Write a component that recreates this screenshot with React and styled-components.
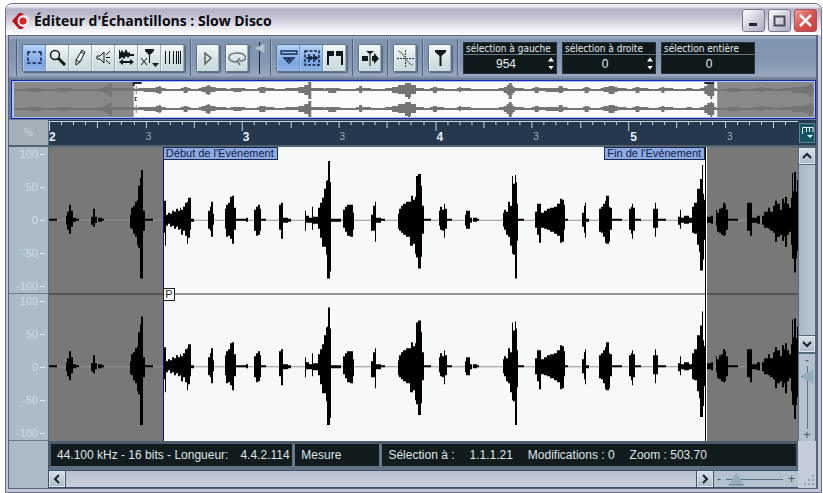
import React from 'react';
import styled, { createGlobalStyle, css } from 'styled-components';

const Global = createGlobalStyle`
  * { box-sizing: border-box; }
  body { margin: 0; background: #fff; font-family: "Liberation Sans", Arial, sans-serif; font-size: 11px; }
  button, input { font: inherit; margin: 0; padding: 0; border: 0; }
`;

const Page = styled.div`
  height: 100vh;
  min-height: 420px;
  padding: 3px 1px 0 5px;
`;
const Window = styled.main`
  height: 100%;
  display: flex;
  flex-direction: column;
  border: 1px solid #6e6e83;
  border-radius: 7px 7px 0 0;
  background: #c5c6da;
  padding: 0 3px 3px 2px;
  overflow: hidden;
`;
const TitleBar = styled.header`
  flex: none;
  height: 31px;
  margin: 0 -3px 0 -2px;
  padding: 2px 4px 0 5px;
  display: flex;
  align-items: center;
  gap: 5px;
  background: linear-gradient(#f4f3fa 0, #e9e8f2 3px, #b4b2c4 5px, #bbb9ca 10px, #dddce6 20px, #fff 30px);
`;
const Title = styled.h1`
  flex: 1;
  margin: 0;
  font: bold 14px/20px "Open Sans", "Noto Sans", sans-serif;
  color: #08080c;
  white-space: nowrap;
`;
const WindowButtons = styled.div`
  display: flex;
  gap: 3px;
`;
const WindowButton = styled.button`
  width: 23px;
  height: 23px;
  display: grid;
  place-items: center;
  border: 1px solid ${p => (p.$close ? '#a3535c' : '#77778a')};
  border-radius: 3px;
  background: ${p => (p.$close
    ? 'linear-gradient(135deg, #eda19d, #d8524f 50%, #c7423f)'
    : 'linear-gradient(135deg, #fff, #c9c9d8 60%, #aeaec4)')};
`;
const Body = styled.div`
  flex: 1;
  min-height: 0;
  display: flex;
  flex-direction: column;
  border: 1px solid #56657b;
  border-right-width: 2px;
  background: #6b7c90;
`;
const Toolbar = styled.div`
  flex: none;
  height: 43px;
  padding: 3px 6px 3px 7px;
  display: flex;
  align-items: center;
  gap: 5px;
  background: linear-gradient(#a5b3cb 0, #8194b0 4px, #8496b0 60%, #98a6be 92%, #6b7c93);
`;
const Separator = styled.span`
  align-self: stretch;
  width: 1px;
  flex: none;
  background: #4d6079;
  box-shadow: 1px 0 #9aabc2;
`;
const ToolGroup = styled.div`
  display: flex;
  flex: none;
  border: 1px solid #5f7389;
  border-radius: 2px;
  box-shadow: 1px 1px 1px #53657b;
`;
const ToolButton = styled.button`
  width: ${p => (p.$single ? 22 : 23)}px;
  height: 26px;
  display: grid;
  place-items: center;
  color: #10181c;
  background: ${p => (p.$active
    ? 'linear-gradient(#b5d2fb, #7ba5e0 70%, #93b6e8)'
    : 'linear-gradient(#f4faf9, #d5e2e5 55%, #cbdade)')};
  border-left: 1px solid ${p => (p.$active ? '#a9c6f0' : '#eef5f8')};
  border-right: 1px solid ${p => (p.$active ? '#7596c8' : '#9aabb7')};
  svg { display: block; }
`;
const Readout = styled.label`
  flex: 0 1 94px;
  min-width: 0;
  height: 32px;
  color: #e6eef0;
  background: #0f181b;
  border: 1px solid #26343d;
  overflow: hidden;
`;
const ReadoutName = styled.span`
  display: block;
  height: 12px;
  padding-left: 2px;
  border-bottom: 1px solid #66777d;
  font: 10px/11px "DejaVu Sans Condensed", "DejaVu Sans", sans-serif;
  white-space: nowrap;
`;
const ReadoutLine = styled.span`
  display: flex;
  height: 18px;
  align-items: center;
`;
const ReadoutInput = styled.input`
  flex: 1;
  width: 0;
  height: 18px;
  padding-left: ${p => (p.$spin ? 0 : 2)}px;
  background: transparent;
  color: inherit;
  text-align: center;
  font-size: 12px;
`;
const Spinner = styled.span`
  display: flex;
  flex-direction: column;
  gap: 4px;
  width: 8px;
`;
const SpinButton = styled.button`
  width: 6px;
  height: 5px;
  background: #fff;
  clip-path: ${p => (p.$down ? 'polygon(0 0, 100% 0, 50% 80%)' : 'polygon(50% 20%, 100% 100%, 0 100%)')};
`;
const Overview = styled.div`
  flex: none;
  height: 39px;
  margin: 1px 0 1px 2px;
  border: 1px solid #1b23ad;
  background: #a9c4fb;
  padding: 1px 1px 1px 2px;
  svg { display: block; width: 100%; height: 100%; }
`;
const RulerRow = styled.div`
  flex: none;
  height: 27px;
  display: grid;
  grid-template-columns: 39px minmax(0, 1fr) 18px;
  border-bottom: 2px solid #51646f;
`;
const RulerCorner = styled.div`
  display: grid;
  place-items: center;
  color: #cdd7df;
  background: #a5afba;
  font-size: 10px;
`;
const Ruler = styled.div`
  background: #25384c;
  border-left: 1px solid #566a79;
  overflow: hidden;
`;
const RulerTicks = styled.svg`
  display: block;
  width: 100%;
  height: 11px;
`;
const RulerLabels = styled.div`
  display: grid;
  grid-template-columns: repeat(7, 97fr) 71fr;
`;
const RulerLabel = styled.span`
  font: ${p => (p.$bar ? 'bold 12px' : '10px')}/12px "Liberation Sans", Arial, sans-serif;
  color: ${p => (p.$bar ? '#e3f1fa' : '#9aaab8')};
`;
const RulerCell = styled.div`
  display: grid;
  place-items: center;
  background: #25384c;
`;
const RulerButton = styled.button`
  width: 16px;
  height: 20px;
  display: grid;
  place-items: center;
  color: #e3f5f7;
  background: #155366;
  border: 1px solid #5b8695;
`;
const Editor = styled.div`
  flex: 1;
  min-height: 0;
  display: grid;
  grid-template-columns: 39px minmax(0, 1fr) 18px;
`;
const Scales = styled.div`
  display: grid;
  grid-template-rows: 1fr 1fr;
  background: #acbbc8;
`;
const Scale = styled.div`
  display: flex;
  flex-direction: column;
  justify-content: space-between;
  padding: 1px 3px 0 0;
  border-bottom: 1px solid #6d7d8e;
  color: #d2dce4;
  line-height: 13px;
  text-align: right;
`;
const Mark = styled.span`
  display: flex;
  justify-content: flex-end;
  align-items: center;
  gap: 2px;
  &::after { content: ""; width: 5px; height: 1px; background: #e2eaf0; }
`;
const Canvas = styled.div`
  position: relative;
  display: grid;
  border-left: 1px solid #566a79;
  background: #787878;
`;
const Wave = styled.svg`
  position: absolute;
  inset: 0;
  width: 100%;
  height: 100%;
`;
const EventRange = styled.div`
  position: relative;
  display: flex;
  justify-content: space-between;
  align-items: flex-start;
  margin: 0 12.4% 0 15.2%;
`;
const Flag = styled.span`
  height: 13px;
  padding: 0 3px 0 2px;
  border: 1px solid #1c2a52;
  background: #8eaae4;
  color: #111e42;
  line-height: 11px;
  white-space: nowrap;
`;
const PhaseMarker = styled.span`
  position: absolute;
  left: 0;
  top: calc(50% - 6px);
  width: 12px;
  height: 13px;
  border: 1px solid #222;
  background: #fff;
  color: #222;
  line-height: 11px;
  text-align: center;
`;
const SideColumn = styled.div`
  display: flex;
  flex-direction: column;
  gap: 1px;
  padding: 1px 1px 0 1px;
  background: #566a79;
`;
const ScrollButton = styled.button`
  flex: none;
  width: 16px;
  height: 16px;
  display: grid;
  place-items: center;
  color: #17232c;
  background: linear-gradient(#d7dfe7, #adbbca);
  border: 1px solid #dce5ed;
`;
const track = css`
  background: ${p => (p.$horizontal ? 'linear-gradient(#b7c0cc, #cbd0dd)' : 'linear-gradient(90deg, #a7b6c2, #bcc9d3)')};
`;
const ScrollTrack = styled.div`
  flex: 1;
  min-height: 0;
  ${track}
`;
const ZoomBox = styled.div`
  flex: none;
  display: flex;
  flex-direction: ${p => (p.$horizontal ? 'row' : 'column')};
  align-items: center;
  justify-content: space-between;
  ${p => (p.$horizontal ? 'width: 84px; padding: 0 3px; gap: 5px;' : 'height: 87px; margin-top: 1px;')}
  color: #465563;
  font-size: 12px;
  line-height: 12px;
  background: #b4c2cf;
`;
const Slider = styled.input.attrs({ type: 'range' })`
  appearance: none;
  flex: 1;
  min-width: 0;
  min-height: 0;
  width: 14px;
  background: ${p => (p.$horizontal
    ? 'linear-gradient(#5f7180, #5f7180) center / 100% 1px no-repeat'
    : 'linear-gradient(#5f7180, #5f7180) center / 1px 100% no-repeat')};
  ${p => !p.$horizontal && 'writing-mode: vertical-lr;'}
  &::-webkit-slider-thumb {
    appearance: none;
    width: ${p => (p.$horizontal ? 16 : 13)}px;
    height: ${p => (p.$horizontal ? 13 : 15)}px;
    background: linear-gradient(${p => (p.$horizontal ? '' : '270deg, ')}#96abbc 80%, #5f7486);
    clip-path: ${p => (p.$horizontal ? 'polygon(50% 0, 100% 100%, 0 100%)' : 'polygon(0 50%, 100% 0, 100% 100%)')};
  }
`;
const ToolSlider = styled(Slider)`
  flex: none;
  width: 11px;
  height: 32px;
  background: linear-gradient(#182836, #182836) center / 1px 100% no-repeat;
  &::-webkit-slider-thumb { width: 10px; height: 9px; background: #b4c3d4; }
`;
const Footer = styled.div`
  flex: none;
  display: grid;
  grid-template-columns: 39px minmax(0, 1fr) 18px;
`;
const FooterSide = styled.div`
  display: flex;
  align-items: flex-end;
  justify-content: flex-end;
  background: ${p => (p.$grip ? '#c3ccd8' : '#adbbc9')};
`;
const StatusBar = styled.div`
  height: 29px;
  display: grid;
  grid-template-columns: 241fr 84fr 413fr;
  gap: 3px;
  border: 3px solid #4b5d6c;
  border-bottom: 4px solid #5f7284;
  border-right-width: 2px;
  background: #64798a;
`;
const StatusCell = styled.div`
  display: flex;
  align-items: center;
  gap: ${p => (p.$tight ? 12 : 15)}px;
  min-width: 0;
  overflow: hidden;
  padding-left: 6px;
  background: #121b1e;
  color: #dfe6e6;
  font-size: 12px;
  white-space: nowrap;
`;
const ScrollRow = styled.div`
  height: 18px;
  display: flex;
  gap: 1px;
  padding: 1px 0 1px 1px;
  background: #3f5267;
`;

const icons = {
  select: <g fill="none" stroke="#16264a" strokeWidth="1.500" strokeDasharray="3.500 2"><path d="M1 3H16M1 14H16M2 3V14M15 3V14" /></g>,
  zoom: <g fill="none" stroke="currentColor"><circle cx="6" cy="6" r="4.5" strokeWidth="1.5" /><path d="M9 9L16 16" strokeWidth="3" /></g>,
  draw: <path d="M10 1L13 3L8 13L4 16L4 11ZM4 11L8 13M9 3L12 5" fill="#eef3f3" stroke="currentColor" />,
  play: <path d="M2 7H5L9 3V14L5 10H2ZM11 6L15 2M11 8.500H15M11 11L15 15" fill="none" stroke="currentColor" />,
  scrub: <g fill="currentColor"><path d="M1 1H2V4L4 1L6 4L8 0L10 4L12 3V5H16V7H12L10 9L8 7L6 10L4 8L2 10H1Z" /><path d="M1 13L5 10V12H12V10L16 13L12 16V14H5V16Z" /></g>,
  warp: <g fill="currentColor"><path d="M4 0H13V2L9 6V14H8V6L4 2Z" /><path d="M0 9L6 16M6 9L0 16" stroke="currentColor" fill="none" /><path d="M11 14H18L14.500 18Z" /></g>,
  grid: <path d="M1.500 2V15M5.500 2V15M9.500 2V15M12.500 2V15M14.500 2V15M16.500 2V15" stroke="currentColor" />,
  audition: <path d="M6 4L12 9L6 15Z" fill="#dce7e6" stroke="#53625f" strokeWidth="1.500" />,
  loop: <g fill="none" stroke="#6a7478" strokeWidth="1.500"><path d="M10 13C-2 13-2 4 9 4C20 4 20 13 11 12" /><path d="M12 9L9 12L12 16" /></g>,
  event: <g fill="none" stroke="#172c50" strokeWidth="1.300"><path d="M1 2H17V5H1Z" /><path d="M4 9H14L9 14ZM8 10H10V11H8Z" /></g>,
  region: <g fill="none" stroke="#12223c"><path d="M2 2H16V16H2Z" strokeWidth="1.500" strokeDasharray="3 1.500" /><path d="M3 9H15M6 5V13M8 7V11M11 5V13M13 7V11" strokeWidth="1.600" /></g>,
  flags: <path d="M1 2H8V7H3V16H1ZM10 2H17V16H15V7H10Z" fill="currentColor" />,
  snap: <g fill="currentColor"><path d="M1 7H7V12H1ZM11 7H13V4L18 9.500L13 15V12H11Z" /><path d="M5 2H13L9.500 5V17H8.500V5Z" /></g>,
  zero: <g fill="none" stroke="#2b373b"><path d="M1 9.500H18M9.500 1V18" strokeDasharray="2 1" /><path d="M2 2C8 2 10 16 17 16" stroke="#8b9796" strokeWidth="1.600" /></g>,
  hitpoint: <path d="M4 1H15V3L10.500 7V17H8.500V7L4 3Z" fill="currentColor" />,
};

function Tool({ icon, label, active, single }) {
  return (
    <ToolButton type="button" aria-label={label} aria-pressed={!!active} $active={active} $single={single}>
      <svg width="18" height="18" viewBox="0 0 18 18">{icons[icon]}</svg>
    </ToolButton>
  );
}

function Field({ name, value, spin }) {
  return (
    <Readout>
      <ReadoutName>{name}</ReadoutName>
      <ReadoutLine>
        <ReadoutInput defaultValue={value} $spin={spin} />
        {spin && (
          <Spinner>
            <SpinButton type="button" aria-label="Augmenter" />
            <SpinButton type="button" aria-label="Diminuer" $down />
          </Spinner>
        )}
      </ReadoutLine>
    </Readout>
  );
}

// Envelope of one channel: start, end, height above and height below the axis.
const envelope = [
  [0, 8, 1, 0], [17, 18, 4, 4], [18, 20, 8, 9], [20, 22, 15, 13], [22, 24, 9, 6], [24, 27, 2, 1], [27, 30, 1, 0],
  [42, 44, 3, 4], [44, 46, 11, 6], [46, 48, 3, 2], [49, 53, 2, 1], [53, 55, 1, 0],
  [81, 82, 5, 7], [82, 84, 12, 8], [84, 86, 14, 13], [86, 88, 18, 16], [88, 89, 20, 24], [89, 91, 34, 27], [91, 92, 42, 58], [92, 94, 50, 58], [94, 96, 9, 10], [96, 104, 1, 0],
  [115, 116, 19, 12], [116, 117, 19, 25], [117, 119, 5, 5], [119, 121, 7, 3], [121, 123, 6, 6], [123, 125, 9, 5], [125, 127, 8, 8], [127, 129, 11, 6], [129, 131, 9, 9], [131, 132, 12, 8], [132, 134, 10, 14], [134, 136, 13, 10], [136, 138, 17, 15], [138, 139, 18, 23], [139, 141, 22, 17], [141, 142, 22, 9], [142, 145, 1, 1],
  [159, 161, 9, 8], [161, 162, 13, 10], [162, 164, 18, 16], [164, 165, 6, 4],
  [176, 177, 11, 8], [177, 179, 15, 16], [179, 181, 17, 15], [181, 183, 23, 18], [183, 185, 24, 23], [185, 187, 12, 9], [187, 197, 1, 0], [197, 199, 2, 1],
  [205, 207, 10, 10], [207, 209, 13, 15], [209, 211, 15, 14], [211, 212, 11, 10], [212, 217, 1, 0],
  [230, 232, 15, 9], [232, 234, 17, 18], [234, 239, 2, 2], [239, 242, 1, 1],
  [256, 257, 9, 10], [257, 260, 4, 2], [260, 263, 2, 2], [263, 264, 13, 9], [264, 269, 3, 3],
  [269, 271, 12, 8], [271, 273, 17, 17], [273, 275, 22, 26], [275, 277, 31, 26], [277, 278, 39, 34], [278, 279, 40, 58], [279, 281, 59, 58], [281, 282, 38, 51], [282, 292, 1, 1],
  [294, 296, 10, 7], [296, 298, 13, 11], [298, 301, 15, 15], [301, 304, 15, 16], [304, 305, 7, 9],
  [322, 324, 5, 10], [324, 326, 14, 10], [326, 327, 18, 21], [327, 332, 2, 2], [332, 336, 1, 0],
  [349, 350, 6, 8], [350, 352, 11, 10], [352, 354, 14, 12], [354, 357, 16, 14], [357, 361, 18, 16], [361, 362, 18, 25], [362, 364, 24, 25], [364, 366, 20, 23], [366, 367, 23, 33], [367, 369, 44, 37], [369, 372, 46, 48], [372, 373, 34, 36], [373, 375, 14, 13], [375, 382, 1, 0],
  [390, 391, 9, 5], [391, 393, 13, 9], [393, 395, 10, 10], [395, 396, 16, 17], [396, 398, 11, 8], [398, 403, 1, 0],
  [416, 417, 5, 5], [417, 421, 9, 8], [421, 423, 2, 2], [424, 428, 2, 1], [428, 430, 1, 0],
  [454, 455, 7, 6], [455, 457, 10, 9], [457, 459, 8, 14], [459, 461, 18, 16], [461, 463, 14, 25], [463, 464, 44, 33], [464, 466, 36, 34], [466, 467, 45, 58], [467, 468, 38, 58], [468, 469, 16, 20], [469, 475, 1, 0],
  [486, 488, 8, 7], [488, 490, 16, 14], [490, 492, 16, 22], [492, 495, 7, 7], [495, 498, 9, 8], [498, 501, 11, 9], [501, 505, 12, 11], [505, 508, 13, 13], [508, 511, 16, 15], [511, 513, 21, 22], [513, 515, 20, 21], [515, 516, 15, 9], [516, 519, 1, 0],
  [533, 535, 7, 6], [535, 536, 14, 12], [536, 537, 17, 17], [537, 540, 1, 1],
  [550, 552, 11, 11], [552, 554, 13, 12], [554, 556, 16, 16], [556, 557, 19, 22], [557, 560, 24, 23], [560, 561, 13, 21], [561, 563, 12, 9], [563, 573, 1, 0],
  [580, 582, 11, 9], [582, 583, 13, 13], [583, 584, 16, 18], [584, 586, 12, 10], [586, 592, 1, 0],
  [604, 606, 11, 7], [606, 607, 17, 16], [607, 609, 11, 7], [609, 617, 1, 0],
  [629, 631, 3, 4], [631, 632, 10, 8], [632, 635, 2, 2], [635, 640, 4, 3], [640, 643, 2, 2],
  [643, 645, 13, 12], [645, 648, 17, 13], [648, 650, 31, 24], [650, 651, 31, 31], [651, 653, 41, 50], [653, 654, 55, 50], [654, 655, 26, 39], [655, 657, 20, 19],
  [658, 662, 3, 2], [662, 664, 4, 3], [667, 668, 10, 5], [668, 670, 7, 11], [670, 672, 11, 12], [672, 674, 12, 14], [674, 676, 17, 15], [676, 677, 15, 14], [677, 679, 10, 9], [679, 689, 1, 0],
  [698, 701, 17, 10], [701, 703, 17, 15], [703, 708, 2, 2], [708, 711, 4, 3],
  [713, 715, 4, 4], [715, 719, 8, 7], [719, 721, 12, 8], [721, 724, 8, 10], [724, 726, 14, 12], [726, 728, 19, 21], [728, 731, 16, 16], [731, 733, 10, 14], [733, 735, 21, 20], [735, 736, 17, 16], [736, 738, 23, 26], [738, 740, 16, 14], [740, 742, 12, 11], [742, 743, 22, 24], [743, 744, 47, 38], [744, 745, 29, 38], [745, 747, 48, 52], [747, 748, 28, 38], [748, 749, 40, 30],
];

const overviewEnvelope = [
  [0, 802, 0, 1], [15, 21, 1, 1], [17, 27, 1, 2], [43, 57, 1, 1], [46, 53, 1, 2], [86, 90, 1, 2], [90, 93, 2, 3], [93, 96, 4, 5], [96, 98, 6, 7], [98, 121, 1, 1],
  [122, 123, 3, 4], [124, 152, 1, 1], [130, 144, 1, 2], [142, 148, 2, 3], [145, 147, 3, 4], [167, 177, 1, 1], [170, 174, 2, 3], [185, 213, 1, 1], [188, 202, 2, 2], [192, 197, 3, 4], [194, 196, 4, 5], [217, 232, 1, 1], [220, 228, 1, 2], [244, 261, 1, 1], [246, 252, 2, 3],
  [272, 311, 1, 1], [285, 298, 2, 3], [291, 298, 4, 5], [295, 298, 7, 9], [312, 327, 1, 1], [315, 323, 1, 3], [343, 358, 1, 1], [346, 349, 3, 3], [372, 411, 1, 1], [379, 403, 2, 3], [385, 403, 4, 4], [392, 398, 6, 7], [395, 397, 6, 9], [417, 431, 1, 1], [420, 424, 2, 3], [444, 458, 1, 1], [446, 448, 2, 2],
  [486, 511, 1, 1], [491, 502, 2, 3], [494, 500, 4, 5], [496, 499, 6, 9], [519, 555, 1, 1], [522, 526, 2, 3], [533, 551, 1, 2], [546, 550, 3, 3], [570, 578, 1, 1], [572, 576, 2, 3], [588, 614, 1, 1], [591, 605, 2, 2], [596, 602, 3, 4], [620, 636, 1, 1], [623, 627, 2, 3], [646, 661, 1, 1], [649, 652, 2, 3], [674, 680, 1, 1],
  [688, 704, 1, 1], [692, 702, 3, 4], [695, 702, 5, 6], [698, 700, 6, 9], [715, 727, 1, 2], [742, 760, 1, 1], [747, 751, 2, 2], [770, 802, 1, 1], [780, 798, 2, 3], [792, 801, 3, 4], [797, 800, 5, 7],
];

const toPath = (runs, axis) => runs
  .map(([from, to, up, down]) => `M${from} ${axis - up}H${to}V${axis + down + 1}H${from}Z`)
  .join('');

const ticks = Array.from({ length: 62 }, (_, i) => ({
  x: Math.round((i * 1933) / 160),
  size: i % 16 === 0 ? 9 : i % 4 === 0 ? 6 : 3,
}));

const levels = ['100', '50', '0', '-50', '-100'];
const rulerLabels = ['2', '3', '3', '3', '4', '3', '5', '3'];

function Chevron({ d }) {
  return <svg width="10" height="10" viewBox="0 0 10 10"><path d={d} fill="none" stroke="currentColor" strokeWidth="2" /></svg>;
}

export default function App() {
  return (
    <Page>
      <Global />
      <Window>
        <TitleBar>
          <svg width="18" height="18" viewBox="0 0 18 18">
            <path d="M1 9L8 1L11 1L16 6V12L11 17H8Z" fill="#b9141d" />
            <circle cx="12.500" cy="9" r="6" fill="#f6eef2" />
            <circle cx="12" cy="9" r="3.500" fill="#d8232a" />
          </svg>
          <Title>Éditeur d'Échantillons : Slow Disco</Title>
          <WindowButtons>
            <WindowButton type="button" aria-label="Réduire">
              <svg width="17" height="17"><path d="M4 12.500H12" stroke="#25252e" strokeWidth="3" /></svg>
            </WindowButton>
            <WindowButton type="button" aria-label="Agrandir">
              <svg width="17" height="17"><path d="M3.500 4.500H13.500V13.500H3.500ZM3 4.500H14" fill="none" stroke="#4b4b58" strokeWidth="2" /></svg>
            </WindowButton>
            <WindowButton type="button" aria-label="Fermer" $close>
              <svg width="17" height="17"><path d="M3 3L14 14M14 3L3 14" stroke="#fff" strokeWidth="2.500" /></svg>
            </WindowButton>
          </WindowButtons>
        </TitleBar>
        <Body>
          <Toolbar role="toolbar">
            <Separator />
            <ToolGroup>
              <Tool icon="select" label="Sélection" active />
              <Tool icon="zoom" label="Loupe" />
              <Tool icon="draw" label="Crayon" />
              <Tool icon="play" label="Lecture" />
              <Tool icon="scrub" label="Scrub" />
              <Tool icon="warp" label="Repères" />
              <Tool icon="grid" label="Grille" />
            </ToolGroup>
            <Separator />
            <ToolGroup><Tool icon="audition" label="Écouter" single /></ToolGroup>
            <ToolGroup><Tool icon="loop" label="Boucle" single /></ToolGroup>
            <ToolSlider aria-label="Volume" defaultValue="10" />
            <Separator />
            <ToolGroup>
              <Tool icon="event" label="Afficher l'événement" active />
              <Tool icon="region" label="Afficher les régions" active />
              <Tool icon="flags" label="Limites" />
            </ToolGroup>
            <Separator />
            <ToolGroup><Tool icon="snap" label="Calage" single /></ToolGroup>
            <Separator />
            <ToolGroup><Tool icon="zero" label="Passage à zéro" single /></ToolGroup>
            <Separator />
            <ToolGroup><Tool icon="hitpoint" label="Mode repères" single /></ToolGroup>
            <Separator />
            <Field name="sélection à gauche" value="954" spin />
            <Field name="sélection à droite" value="0" spin />
            <Field name="sélection entière" value="0" />
          </Toolbar>

          <Overview>
            <svg viewBox="0 0 802 35" preserveAspectRatio="none">
              <rect width="802" height="35" fill="#898989" />
              <rect x="120" width="585" height="35" fill="#fbfbfd" />
              <path d={toPath(overviewEnvelope, 7) + toPath(overviewEnvelope, 26)} fill="#747474" />
              <path d="M119 0H128V2H121V4H119ZM692 0H702V2H692ZM121 15H123V16H122V18H123V19H121Z" fill="#252834" />
            </svg>
          </Overview>

          <RulerRow>
            <RulerCorner>%</RulerCorner>
            <Ruler>
              <RulerTicks viewBox="0 0 750 11" preserveAspectRatio="none">
                <path d={ticks.map(t => `M${t.x} 2h1v${t.size}h-1z`).join('') + 'M0 1h750v1h-750z'} fill="#c8d8e4" />
              </RulerTicks>
              <RulerLabels>
                {rulerLabels.map((label, i) => <RulerLabel key={i} $bar={i % 2 === 0}>{label}</RulerLabel>)}
              </RulerLabels>
            </Ruler>
            <RulerCell>
              <RulerButton type="button" aria-label="Format de la règle">
                <svg width="13" height="17" viewBox="0 0 13 17">
                  <path d="M1.500 10V3.500H12V8M5.500 3V8M8.500 3V8" fill="none" stroke="currentColor" />
                  <path d="M6 11H12L9 14Z" fill="currentColor" />
                </svg>
              </RulerButton>
            </RulerCell>
          </RulerRow>

          <Editor>
            <Scales>
              {[0, 1].map(channel => (
                <Scale key={channel}>{levels.map(level => <Mark key={level}>{level}</Mark>)}</Scale>
              ))}
            </Scales>
            <Canvas>
              <Wave viewBox="0 0 749 295" preserveAspectRatio="none">
                <rect x="115" width="542" height="295" fill="#f7f8fa" />
                <path d="M0 73h749v1h-749zM0 220h749v1h-749z" fill="#929292" />
                <path d="M0 147h749v1h-749z" fill="#333" />
                <rect x="114" width="1" height="295" fill="#11117d" />
                <rect x="656" width="1" height="295" fill="#000" />
                <rect x="657" width="1" height="295" fill="#fff" />
                <path d={toPath(envelope, 73) + toPath(envelope, 220)} fill="#000" />
              </Wave>
              <EventRange>
                <Flag>Début de l'Evénement</Flag>
                <Flag>Fin de l'Evénement</Flag>
                <PhaseMarker>P</PhaseMarker>
              </EventRange>
            </Canvas>
            <SideColumn>
              <ScrollButton type="button" aria-label="Défiler vers le haut"><Chevron d="M1 7L5 3L9 7" /></ScrollButton>
              <ScrollTrack />
              <ScrollButton type="button" aria-label="Défiler vers le bas"><Chevron d="M1 3L5 7L9 3" /></ScrollButton>
              <ZoomBox>
                <span>-</span>
                <Slider aria-label="Zoom vertical" defaultValue="6" />
                <span>+</span>
              </ZoomBox>
            </SideColumn>
          </Editor>

          <Footer>
            <FooterSide />
            <div>
              <StatusBar>
                <StatusCell $tight>
                  <span>44.100 kHz - 16 bits - Longueur:</span>
                  <span>4.4.2.114</span>
                </StatusCell>
                <StatusCell>Mesure</StatusCell>
                <StatusCell>
                  <span>Sélection à :</span>
                  <span>1.1.1.21</span>
                  <span>Modifications : 0</span>
                  <span>Zoom : 503.70</span>
                </StatusCell>
              </StatusBar>
              <ScrollRow>
                <ScrollButton type="button" aria-label="Défiler à gauche"><Chevron d="M7 1L3 5L7 9" /></ScrollButton>
                <ScrollTrack $horizontal />
                <ScrollButton type="button" aria-label="Défiler à droite"><Chevron d="M3 1L7 5L3 9" /></ScrollButton>
                <ZoomBox $horizontal>
                  <span>-</span>
                  <Slider aria-label="Zoom horizontal" defaultValue="6" $horizontal />
                  <span>+</span>
                </ZoomBox>
              </ScrollRow>
            </div>
            <FooterSide $grip>
              <svg width="16" height="16" viewBox="0 0 16 16">
                <path d="M12 3h2v2h-2zM8 7h2v2h-2zM12 7h2v2h-2zM4 11h2v2h-2zM8 11h2v2h-2zM12 11h2v2h-2z" fill="#98a3ae" />
              </svg>
            </FooterSide>
          </Footer>
        </Body>
      </Window>
    </Page>
  );
}
